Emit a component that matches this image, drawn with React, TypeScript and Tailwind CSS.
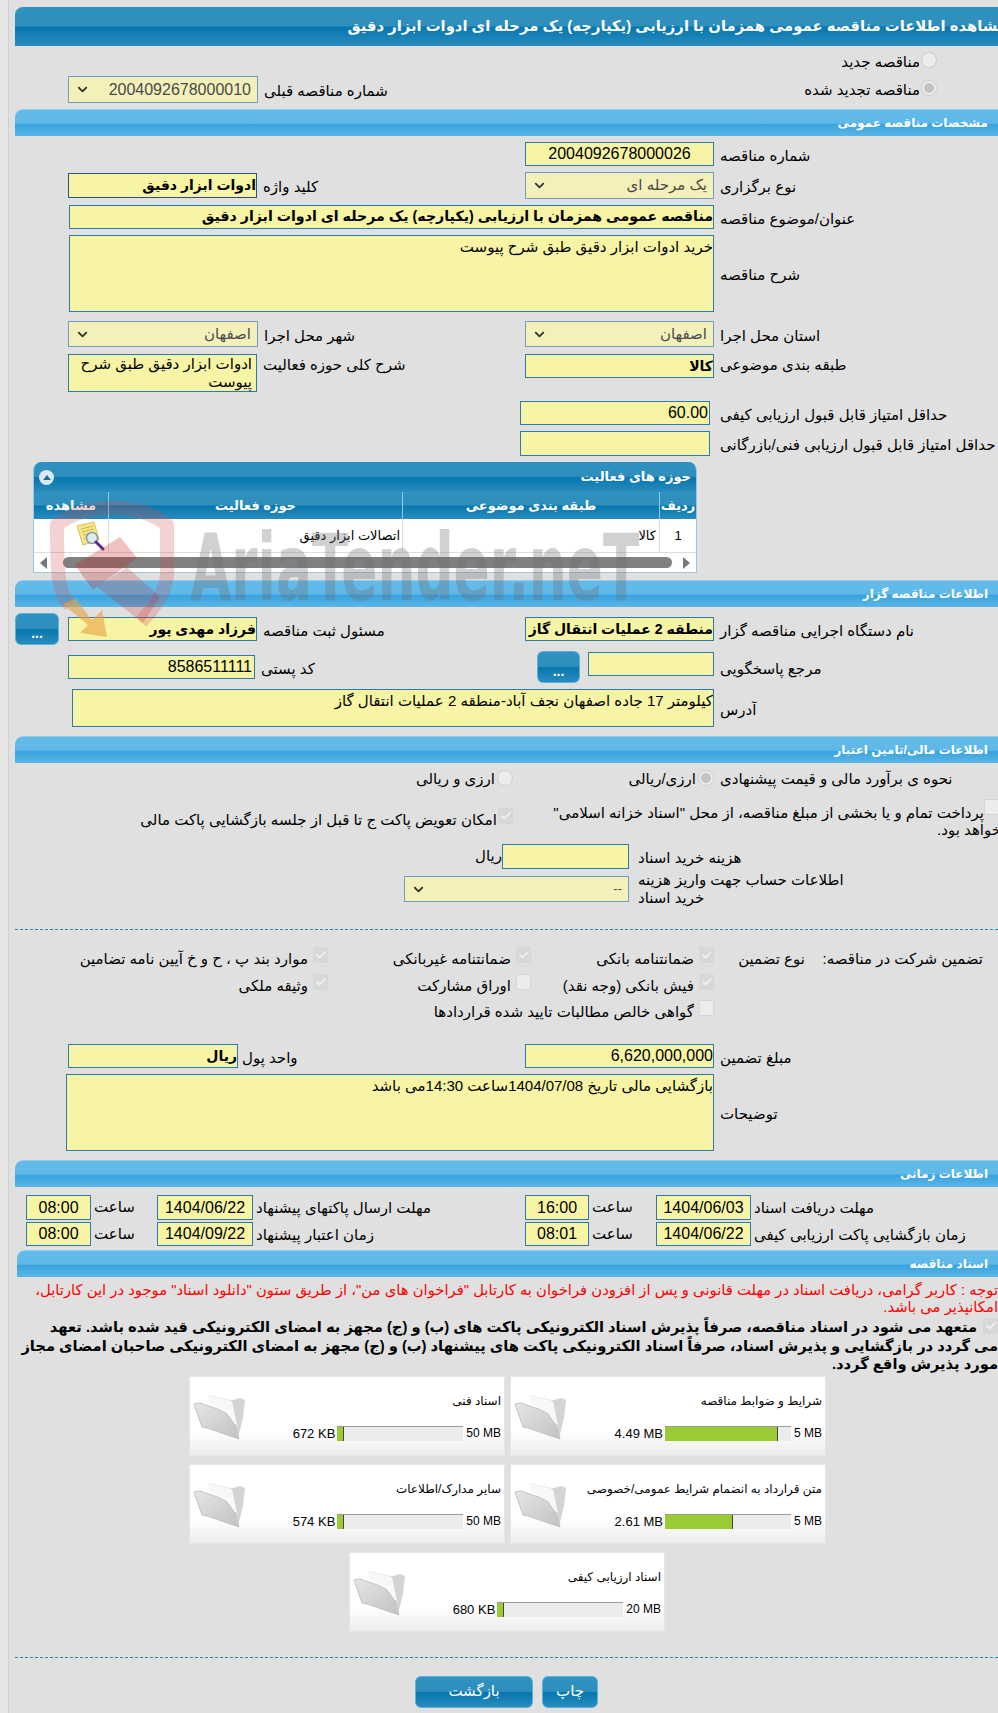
import React from 'react';
import { ChevronDown, Check } from 'lucide-react';

const glossDark = 'bg-[linear-gradient(to_bottom,#2f92c0_0%,#2f8ebc_48%,#0677ae_52%,#2a8cbd_100%)]';
const glossLight = 'bg-[linear-gradient(to_bottom,#64bbea_0%,#5fb8e8_50%,#38a3df_56%,#5cb6e6_100%)]';
const boxBase = 'flex shrink-0 items-center overflow-hidden border border-[#2b7cae] bg-[#f7f5a5] text-black whitespace-nowrap';

function Bar({ children, cls = '' }: { children: React.ReactNode; cls?: string }) {
  return (
    <div dir="rtl" className={`flex h-[27px] items-center rounded-tr-none rounded-tl-[8px] border-t border-[#8fd0f2] pr-[10px] text-[12px] font-bold text-white ${glossLight} ${cls}`}>
      {children}
    </div>
  );
}

function Box({ cls, children, bold, center, top }: { cls: string; children?: React.ReactNode; bold?: boolean; center?: boolean; top?: boolean }) {
  return (
    <div dir="rtl" className={`${boxBase} ${cls} ${bold ? 'font-bold' : ''} ${center ? 'justify-center' : 'justify-start'} ${top ? '!items-start' : ''}`}>
      {children}
    </div>
  );
}

function Sel({ cls, children }: { cls: string; children: React.ReactNode }) {
  return (
    <div className={`flex shrink-0 items-center justify-between border border-[#6f9fc2] bg-[#f3f1b9] pl-[6px] pr-[6px] text-[#4a4a4a] ${cls}`}>
      <ChevronDown className="h-[15px] w-[15px] text-[#333]" strokeWidth={3} />
      <span dir="rtl">{children}</span>
    </div>
  );
}

function Lbl({ children, cls = '' }: { children: React.ReactNode; cls?: string }) {
  return <span dir="rtl" className={`ml-[6px] translate-y-[2px] whitespace-nowrap ${cls}`}>{children}</span>;
}

function Radio({ on }: { on?: boolean }) {
  return (
    <span className="-mt-[3px] flex h-[16px] w-[16px] shrink-0 items-center justify-center rounded-full border border-[#cfcfcf] bg-[#ececec]">
      {on && <span className="h-[10px] w-[10px] rounded-full bg-[#c4c4c4]" />}
    </span>
  );
}

function Tick({ on, cls = '' }: { on?: boolean; cls?: string }) {
  return (
    <span className={`flex h-[16px] w-[15px] shrink-0 items-center justify-center rounded-[2px] border border-[#d6d6d6] ${on ? 'bg-[#d8d8d8]' : 'bg-[#ececec]'} ${cls}`}>
      {on && <Check className="h-[12px] w-[12px] text-[#f4f4f4]" strokeWidth={3} />}
    </span>
  );
}

function Opt({ children, on }: { children: React.ReactNode; on?: boolean }) {
  return (
    <div className="flex items-center justify-end gap-[5px]">
      <span dir="rtl" className="whitespace-nowrap">{children}</span>
      <Tick on={on} cls="-mt-[9px]" />
    </div>
  );
}

function Folder() {
  return (
    <svg viewBox="0 16 60 52" className="mt-[14px] h-[52px] w-[60px] shrink-0">
      <defs>
        <linearGradient id="fold" x1="0" y1="0" x2="1" y2="1">
          <stop offset="0" stopColor="#e6e6e6" />
          <stop offset="1" stopColor="#c2c2c2" />
        </linearGradient>
      </defs>
      <path d="M18 20 L40 25 L43 25 L50 23 L55 25 L53 43 L48 63 L30 40 Z" fill="#d4d4d4" />
      <path d="M18 20 L42 26 L47 50 L22 38 Z" fill="#f8f8f8" />
      <path d="M4 29 L10 28 L30 35 L37 39 L45 50 L49 64 L43 62 L17 53 L12 52 Z" fill="url(#fold)" stroke="#c4c4c4" strokeWidth="1" strokeLinejoin="round" />
    </svg>
  );
}

function DocCard({ title, size, max, fill }: { title: string; size: string; max: string; fill: string }) {
  return (
    <div className="flex h-[80px] w-[316px] border border-[#e6e6e6] bg-[linear-gradient(to_bottom,#ffffff_0%,#ffffff_70%,#ececec_100%)]">
      <Folder />
      <div className="flex min-w-0 flex-1 flex-col pr-[3px] text-[12px] text-black">
        <div dir="rtl" className="mt-[15px] h-[18px] whitespace-nowrap leading-[18px]">{title}</div>
        <div className="mt-[14px] flex items-center justify-end text-[13px]">
          <span className="mr-[2px] whitespace-nowrap">{size}</span>
          <div className="h-[15px] w-[126px] border-t border-[#999] bg-[#ececec]">
            <div className={`h-[14px] border-r border-[#444] bg-[#9acb34] ${fill}`} />
          </div>
          <span className="ml-[3px] whitespace-nowrap text-[12px]">{max}</span>
        </div>
      </div>
    </div>
  );
}

function Btn({ cls, children }: { cls: string; children: React.ReactNode }) {
  return (
    <div className={`flex shrink-0 items-center justify-center rounded-[6px] border border-[#5ab3df] text-white ${glossDark} ${cls}`}>
      {children}
    </div>
  );
}

function DocIcon() {
  return (
    <svg viewBox="0 0 30 30" className="h-[30px] w-[30px]">
      <path d="M2 5 L19 1 L24 19 L8 24 Z" fill="#f7e58a" stroke="#d8c25a" strokeWidth="1" />
      <path d="M6 8 L18 5 M7 11 L19 8 M8 14 L15 12 M9 18 L14 16" stroke="#cdb64f" strokeWidth="1" />
      <circle cx="17" cy="17" r="5.5" fill="#dfeaf2" stroke="#8c9aa8" strokeWidth="1.5" />
      <path d="M21 21 L28 28" stroke="#5a2d86" strokeWidth="3" strokeLinecap="round" />
    </svg>
  );
}

// site watermark laid over the form
function Watermark() {
  return (
    <>
      <svg viewBox="40 490 150 160" className="pointer-events-none absolute left-[31px] top-[490px] h-[160px] w-[150px]">
        <path d="M70 605 C58 592 57 575 57 525 C85 502 140 502 167 525 L167 575 C165 595 152 610 141 622" fill="none" stroke="#d84a4a" strokeOpacity="0.25" strokeWidth="14" />
        <path d="M75 565 L120 537 L137 558 L93 590 Z" fill="#c82020" fillOpacity="0.28" />
        <path d="M97 587 L127 567 L160 597 L143 623 Z" fill="#c82020" fillOpacity="0.22" />
        <path d="M62 605 L75 598 L92 620 L102 610 L107 637 L80 633 L88 625 L70 610 Z" fill="#e8a040" fillOpacity="0.6" />
      </svg>
      <span className="pointer-events-none absolute left-[181px] top-[514px] origin-left scale-x-[0.58] whitespace-nowrap font-['DejaVu_Sans',sans-serif] text-[92px] font-bold leading-[110px] text-[#6a6a6a] opacity-30">
        AriaTender.neT
      </span>
    </>
  );
}

export default function App() {
  return (
    <div className="min-h-[1713px] w-[998px] overflow-hidden bg-[#e6e6e6] pl-[8px] font-['Liberation_Sans','DejaVu_Sans',sans-serif] text-[15px] text-black">
      <div className="relative h-[1713px] overflow-hidden border-l border-[#d0d0d0] bg-[#e0e0e0] pt-[7px]">
        {/* title */}
        <div className={`ml-[6px] flex h-[39px] items-center overflow-hidden rounded-tl-[8px] text-[14.8px] font-bold whitespace-nowrap text-white ${glossDark}`}>
          <div dir="rtl" className="w-full translate-x-[9px]">مشاهده اطلاعات مناقصه عمومی همزمان با ارزیابی (یکپارچه) یک مرحله ای ادوات ابزار دقیق</div>
        </div>

        <div className="mt-[5px] flex h-[20px] items-center justify-end gap-[1px] pr-[61px]">
          <span dir="rtl" className="translate-y-[1px]">مناقصه جدید</span>
          <Radio />
        </div>
        <div className="mt-[5px] grid grid-cols-[516px_1fr] items-center">
          <div className="flex items-center pl-[59px]">
            <Sel cls="h-[27px] w-[190px] text-[16px]">2004092678000010</Sel>
            <Lbl>شماره مناقصه قبلی</Lbl>
          </div>
          <div className="flex items-center justify-end gap-[1px] pr-[61px]">
            <span dir="rtl" className="translate-y-[1px]">مناقصه تجدید شده</span>
            <Radio on />
          </div>
        </div>

        <Bar cls="ml-[6px] mt-[6px]">مشخصات مناقصه عمومی</Bar>

        <div className="mt-[6px] grid grid-cols-[516px_1fr] items-center">
          <div />
          <div className="flex items-center">
            <Box cls="h-[24px] w-[189px] text-[16px]" center>2004092678000026</Box>
            <Lbl>شماره مناقصه</Lbl>
          </div>
        </div>
        <div className="mt-[6px] grid h-[27px] grid-cols-[516px_1fr] items-center">
          <div className="flex items-center pl-[59px]">
            <Box cls="h-[25px] w-[189px] !border-[#26567a] text-[14px]" bold>ادوات ابزار دقیق</Box>
            <Lbl>کلید واژه</Lbl>
          </div>
          <div className="flex items-center">
            <Sel cls="h-[27px] w-[189px] text-[15px]">یک مرحله ای</Sel>
            <Lbl>نوع برگزاری</Lbl>
          </div>
        </div>
        <div className="mt-[6px] flex items-center pl-[60px]">
          <Box cls="h-[24px] w-[645px] text-[14.2px]" bold>مناقصه عمومی همزمان با ارزیابی (یکپارچه) یک مرحله ای ادوات ابزار دقیق</Box>
          <Lbl>عنوان/موضوع مناقصه</Lbl>
        </div>
        <div className="mt-[6px] flex items-center pl-[60px]">
          <Box cls="h-[77px] w-[645px]" top>خرید ادوات ابزار دقیق طبق شرح پیوست</Box>
          <Lbl>شرح مناقصه</Lbl>
        </div>
        <div className="mt-[9px] grid grid-cols-[516px_1fr] items-center">
          <div className="flex items-center pl-[59px]">
            <Sel cls="h-[26px] w-[190px] text-[15px]">اصفهان</Sel>
            <Lbl>شهر محل اجرا</Lbl>
          </div>
          <div className="flex items-center">
            <Sel cls="h-[26px] w-[189px] text-[15px]">اصفهان</Sel>
            <Lbl>استان محل اجرا</Lbl>
          </div>
        </div>
        <div className="mt-[7px] grid h-[38px] grid-cols-[516px_1fr] items-start">
          <div className="flex items-start pl-[59px]">
            <div dir="rtl" className="h-[38px] w-[189px] shrink-0 border border-[#2b7cae] bg-[#f7f5a5] pr-[4px] leading-[18px]">ادوات ابزار دقیق طبق شرح پیوست</div>
            <Lbl cls="!translate-y-0">شرح کلی حوزه فعالیت</Lbl>
          </div>
          <div className="flex items-start">
            <Box cls="h-[24px] w-[189px] text-[14px]" bold>کالا</Box>
            <Lbl cls="!translate-y-0">طبقه بندی موضوعی</Lbl>
          </div>
        </div>
        <div className="ml-[511px] mt-[9px] flex items-center">
          <div className="flex h-[24px] w-[190px] items-center justify-end border border-[#2b7cae] bg-[#f7f5a5] pr-[1px] text-[16px]">60.00</div>
          <Lbl cls="!ml-[10px]">حداقل امتیاز قابل قبول ارزیابی کیفی</Lbl>
        </div>
        <div className="ml-[511px] mt-[6px] flex items-center">
          <div className="h-[25px] w-[190px] border border-[#2b7cae] bg-[#f7f5a5]" />
          <Lbl cls="!ml-[10px]">حداقل امتیاز قابل قبول ارزیابی فنی/بازرگانی</Lbl>
        </div>

        {/* activity table */}
        <div className="ml-[24px] mt-[6px] h-[111px] w-[664px] overflow-hidden rounded-t-[8px] border border-t-0 border-[#9cc7e2] bg-white">
          <div className={`flex h-[30px] items-center justify-between px-[5px] text-[13px] font-bold text-white ${glossDark}`}>
            <span className="flex h-[15px] w-[15px] items-center justify-center rounded-full bg-[#dde8f3]">
              <span className="border-x-[4px] border-b-[5px] border-x-transparent border-b-[#1e6f9f]" />
            </span>
            <span dir="rtl">حوزه های فعالیت</span>
          </div>
          <div className={`grid h-[27px] grid-cols-[75px_294px_257px_1fr] text-center text-[13px] font-bold leading-[27px] text-white ${glossDark}`}>
            <div dir="rtl" className="border-r border-[#8cc8e8]">مشاهده</div>
            <div dir="rtl" className="border-r border-[#8cc8e8]">حوزه فعالیت</div>
            <div dir="rtl" className="border-r border-[#8cc8e8]">طبقه بندی موضوعی</div>
            <div dir="rtl">ردیف</div>
          </div>
          <div className="grid h-[34px] grid-cols-[75px_294px_257px_1fr] border-b border-[#ddd] text-[13px] leading-[34px]">
            <div className="flex items-center justify-center border-r border-[#ddd] pl-[38px]"><DocIcon /></div>
            <div dir="rtl" className="border-r border-[#ddd] pr-[2px]">اتصالات ابزار دقیق</div>
            <div dir="rtl" className="border-r border-[#ddd] pr-[3px]">کالا</div>
            <div className="text-center">1</div>
          </div>
          <div className="flex h-[19px] items-center px-[6px]">
            <span className="border-y-[6px] border-r-[7px] border-y-transparent border-r-[#777]" />
            <div className="ml-[16px] mr-[11px] h-[11px] flex-1 rounded-full bg-[#808080]" />
            <span className="border-y-[6px] border-l-[7px] border-y-transparent border-l-[#777]" />
          </div>
        </div>

        <Bar cls="ml-[6px] mt-[7px]">اطلاعات مناقصه گزار</Bar>

        <div className="mt-[6px] grid h-[32px] grid-cols-[516px_1fr] items-center">
          <div className="flex items-center pl-[6px]">
            <Btn cls="mr-[9px] h-[32px] w-[44px] pt-[8px] text-[14px] font-bold">...</Btn>
            <Box cls="h-[24px] w-[189px] text-[14px]" bold>فرزاد مهدی پور</Box>
            <Lbl>مسئول ثبت مناقصه</Lbl>
          </div>
          <div className="flex items-center">
            <Box cls="h-[24px] w-[189px] text-[14px]" bold>منطقه 2 عملیات انتقال گاز</Box>
            <Lbl>نام دستگاه اجرایی مناقصه گزار</Lbl>
          </div>
        </div>
        <div className="mt-[6px] grid h-[32px] grid-cols-[516px_1fr] items-center">
          <div className="flex items-center pl-[59px]">
            <div className="flex h-[24px] w-[187px] items-center justify-end border border-[#2b7cae] bg-[#f7f5a5] pr-[2px] text-[16px]">8586511111</div>
            <Lbl>کد پستی</Lbl>
          </div>
          <div className="flex items-start pl-[12px]">
            <Btn cls="mr-[8px] h-[32px] w-[43px] pt-[8px] text-[14px] font-bold">...</Btn>
            <div className="mt-[1px] h-[24px] w-[126px] shrink-0 border border-[#2b7cae] bg-[#f7f5a5]" />
            <Lbl cls="mt-[5px]">مرجع پاسخگویی</Lbl>
          </div>
        </div>
        <div className="ml-[63px] mt-[6px] flex items-center">
          <Box cls="h-[38px] w-[642px]" top>کیلومتر 17 جاده اصفهان نجف آباد-منطقه 2 عملیات انتقال گاز</Box>
          <Lbl>آدرس</Lbl>
        </div>

        <Bar cls="ml-[6px] mt-[9px]">اطلاعات مالی/تامین اعتبار</Bar>

        <div className="mt-[5px] grid h-[20px] grid-cols-[516px_1fr] items-center">
          <div className="flex items-center justify-end gap-[2px] pr-[12px]">
            <span dir="rtl">ارزی و ریالی</span>
            <Radio />
          </div>
          <div className="flex items-center">
            <div className="flex w-[189px] items-center justify-end gap-[2px]">
              <span dir="rtl">ارزی/ریالی</span>
              <Radio on />
            </div>
            <Lbl cls="!translate-y-0">نحوه ی برآورد مالی و قیمت پیشنهادی</Lbl>
          </div>
        </div>
        <div className="mt-[11px] grid h-[40px] grid-cols-[516px_1fr]">
          <div className="flex items-start justify-end gap-[1px] pr-[12px] pt-[9px]">
            <span dir="rtl" className="mt-[1px] whitespace-nowrap">امکان تعویض پاکت ج تا قبل از جلسه بازگشایی پاکت مالی</span>
            <Tick on />
          </div>
          <div className="flex flex-col">
            <div className="flex justify-end">
              <span dir="rtl" className="mt-[3px] whitespace-nowrap">پرداخت تمام و یا بخشی از مبلغ مناقصه، از محل "اسناد خزانه اسلامی"</span>
              <span className="h-[16px] w-[14px] shrink-0 rounded-l-[2px] border border-r-0 border-[#d6d6d6] bg-[#ececec]" />
            </div>
            <div dir="rtl" className="-mr-[3px] -mt-[6px] whitespace-nowrap">خواهد بود.</div>
          </div>
        </div>
        <div className="ml-[393px] mt-[5px] flex items-center">
          <div dir="rtl" className="w-[100px] text-right whitespace-nowrap">ریال</div>
          <div className="h-[25px] w-[127px] shrink-0 border border-[#2b7cae] bg-[#f7f5a5]" />
          <Lbl cls="!ml-[9px]">هزینه خرید اسناد</Lbl>
        </div>
        <div className="ml-[395px] mt-[7px] flex h-[26px] items-center">
          <Sel cls="h-[26px] w-[225px] text-[13px]">--</Sel>
          <span dir="rtl" className="ml-[9px] text-left leading-[18px] whitespace-nowrap">اطلاعات حساب جهت واریز هزینه<br />خرید اسناد</span>
        </div>

        <div className="ml-[6px] mt-[27px] border-t border-dashed border-[#2a84b4]" />

        <div className="mt-[18px] grid h-[20px] grid-cols-[319px_203px_183px_91px_178px] items-center">
          <Opt on>موارد بند پ ، ح و خ آیین نامه تضامین</Opt>
          <Opt on>ضمانتنامه غیربانکی</Opt>
          <Opt on>ضمانتنامه بانکی</Opt>
          <div dir="rtl" className="whitespace-nowrap">نوع تضمین</div>
          <div dir="rtl" className="whitespace-nowrap">تضمین شرکت در مناقصه:</div>
        </div>
        <div className="mt-[7px] grid h-[20px] grid-cols-[319px_203px_183px] items-center">
          <Opt on>وثیقه ملکی</Opt>
          <Opt>اوراق مشارکت</Opt>
          <Opt on>فیش بانکی (وجه نقد)</Opt>
        </div>
        <div className="mt-[6px] grid h-[20px] grid-cols-[319px_203px_183px] items-center">
          <div />
          <div />
          <div className="-ml-[200px]"><Opt>گواهی خالص مطالبات تایید شده قراردادها</Opt></div>
        </div>

        <div className="mt-[23px] grid grid-cols-[516px_1fr] items-center">
          <div className="flex items-center pl-[59px]">
            <Box cls="h-[24px] w-[170px] text-[14px]" bold>ریال</Box>
            <Lbl cls="!ml-[4px]">واحد پول</Lbl>
          </div>
          <div className="flex items-center">
            <Box cls="h-[24px] w-[189px] text-[16px]">6,620,000,000</Box>
            <Lbl>مبلغ تضمین</Lbl>
          </div>
        </div>
        <div className="ml-[57px] mt-[6px] flex items-center">
          <Box cls="h-[77px] w-[648px]" top>بازگشایی مالی تاریخ 1404/07/08ساعت 14:30می باشد</Box>
          <Lbl>توضیحات</Lbl>
        </div>

        <Bar cls="ml-[6px] mt-[9px]">اطلاعات زمانی</Bar>

        <div className="mt-[8px] grid grid-cols-[516px_1fr] items-center">
          <div className="flex items-center pl-[17px]">
            <Box cls="h-[25px] w-[65px] text-[16px]" center>08:00</Box>
            <span dir="rtl" className="ml-[3px] w-[63px] text-left">ساعت</span>
            <Box cls="h-[25px] w-[96px] text-[16px]" center>1404/06/22</Box>
            <Lbl cls="!ml-[3px] !translate-y-[1px]">مهلت ارسال پاکتهای پیشنهاد</Lbl>
          </div>
          <div className="flex items-center">
            <Box cls="h-[25px] w-[64px] text-[16px]" center>16:00</Box>
            <span dir="rtl" className="ml-[3px] w-[64px] text-left">ساعت</span>
            <Box cls="h-[25px] w-[95px] text-[16px]" center>1404/06/03</Box>
            <Lbl cls="!ml-[3px] !translate-y-[1px]">مهلت دریافت اسناد</Lbl>
          </div>
        </div>
        <div className="mt-[2px] grid grid-cols-[516px_1fr] items-center">
          <div className="flex items-center pl-[17px]">
            <Box cls="h-[24px] w-[65px] text-[16px]" center>08:00</Box>
            <span dir="rtl" className="ml-[3px] w-[63px] text-left">ساعت</span>
            <Box cls="h-[24px] w-[96px] text-[16px]" center>1404/09/22</Box>
            <Lbl cls="!ml-[3px] !translate-y-[1px]">زمان اعتبار پیشنهاد</Lbl>
          </div>
          <div className="flex items-center">
            <Box cls="h-[24px] w-[64px] text-[16px]" center>08:01</Box>
            <span dir="rtl" className="ml-[3px] w-[64px] text-left">ساعت</span>
            <Box cls="h-[24px] w-[95px] text-[16px]" center>1404/06/22</Box>
            <Lbl cls="!ml-[3px] !translate-y-[1px]">زمان بازگشایی پاکت ارزیابی کیفی</Lbl>
          </div>
        </div>

        <Bar cls="ml-[8px] mt-[4px]">اسناد مناقصه</Bar>

        <div dir="rtl" className="mt-[5px] whitespace-nowrap text-[14.8px] leading-[17px] text-[#f00]">
          <div>توجه : کاربر گرامی، دریافت اسناد در مهلت قانونی و پس از افزودن فراخوان به کارتابل "فراخوان های من"، از طریق ستون "دانلود اسناد" موجود در این کارتابل،</div>
          <div>امکانپذیر می باشد.</div>
        </div>
        <div dir="rtl" className="mt-[2px] text-[14.7px] font-bold leading-[18.5px] whitespace-nowrap">
          <div className="flex items-start gap-[6px]">
            <Tick on />
            <span>متعهد می شود در اسناد مناقصه، صرفاً پذیرش اسناد الکترونیکی پاکت های (ب) و (ج) مجهز به امضای الکترونیکی قید شده باشد. تعهد</span>
          </div>
          <div>می گردد در بازگشایی و پذیرش اسناد، صرفاً اسناد الکترونیکی پاکت های پیشنهاد (ب) و (ج) مجهز به امضای الکترونیکی صاحبان امضای مجاز</div>
          <div>مورد پذیرش واقع گردد.</div>
        </div>

        <div className="ml-[180px] mt-[2px] flex gap-[5px]">
          <DocCard title="اسناد فنی" size="672 KB" max="50 MB" fill="w-[5%]" />
          <DocCard title="شرایط و ضوابط مناقصه" size="4.49 MB" max="5 MB" fill="w-[90%]" />
        </div>
        <div className="ml-[180px] mt-[8px] flex gap-[5px]">
          <DocCard title="سایر مدارک/اطلاعات" size="574 KB" max="50 MB" fill="w-[5%]" />
          <DocCard title="متن قرارداد به انضمام شرایط عمومی/خصوصی" size="2.61 MB" max="5 MB" fill="w-[54%]" />
        </div>
        <div className="ml-[340px] mt-[8px] flex">
          <DocCard title="اسناد ارزیابی کیفی" size="680 KB" max="20 MB" fill="w-[5%]" />
        </div>

        <div className="ml-[6px] mt-[25px] border-t border-dashed border-[#2a84b4]" />

        <div className="ml-[406px] mt-[18px] flex gap-[9px] text-[15px]">
          <Btn cls="h-[32px] w-[118px]"><span dir="rtl">بازگشت</span></Btn>
          <Btn cls="h-[32px] w-[56px]"><span dir="rtl">چاپ</span></Btn>
        </div>

        <Watermark />
      </div>
    </div>
  );
}
